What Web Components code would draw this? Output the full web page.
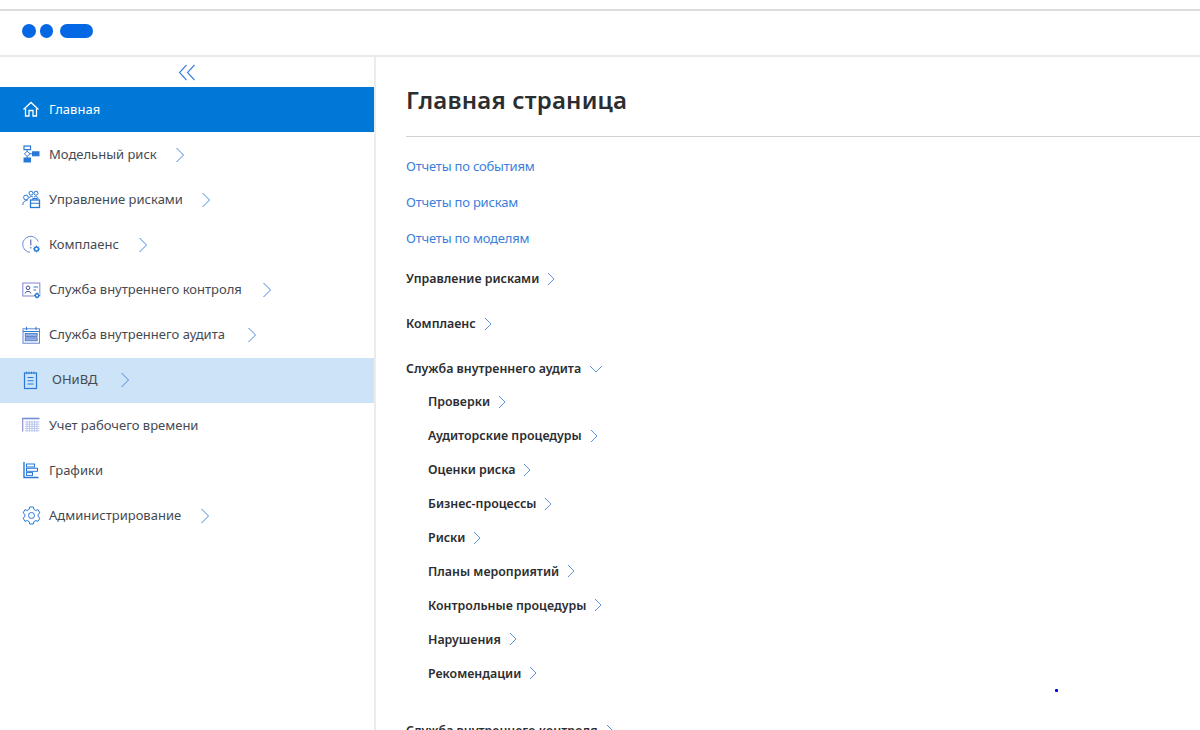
<!DOCTYPE html>
<html lang="ru">
<head>
<meta charset="utf-8">
<title>Главная страница</title>
<style>
  html, body { margin: 0; height: 730px; overflow: hidden; background: #fff; font-family: "Noto Sans", "Open Sans", sans-serif; }
</style>
</head>
<body>
<app-shell>
  <app-header slot="header"></app-header>
  <side-nav slot="nav">
    <nav-item icon="home" active>Главная</nav-item>
    <nav-item icon="model" arrow gap="18">Модельный риск</nav-item>
    <nav-item icon="risk" arrow gap="18">Управление рисками</nav-item>
    <nav-item icon="compliance" arrow gap="19">Комплаенс</nav-item>
    <nav-item icon="control" arrow gap="20">Служба внутреннего контроля</nav-item>
    <nav-item icon="audit" arrow gap="22">Служба внутреннего аудита</nav-item>
    <nav-item icon="note" arrow selected gap="22">ОНиВД</nav-item>
    <nav-item icon="table">Учет рабочего времени</nav-item>
    <nav-item icon="chart">Графики</nav-item>
    <nav-item icon="gear" arrow gap="19">Администрирование</nav-item>
  </side-nav>
  <main-page slot="main" heading="Главная страница">
    <report-link>Отчеты по событиям</report-link>
    <report-link>Отчеты по рискам</report-link>
    <report-link>Отчеты по моделям</report-link>
    <tree-group label="Управление рисками"></tree-group>
    <tree-group label="Комплаенс"></tree-group>
    <tree-group label="Служба внутреннего аудита" open>
      <tree-leaf>Проверки</tree-leaf>
      <tree-leaf>Аудиторские процедуры</tree-leaf>
      <tree-leaf>Оценки риска</tree-leaf>
      <tree-leaf>Бизнес-процессы</tree-leaf>
      <tree-leaf>Риски</tree-leaf>
      <tree-leaf>Планы мероприятий</tree-leaf>
      <tree-leaf>Контрольные процедуры</tree-leaf>
      <tree-leaf>Нарушения</tree-leaf>
      <tree-leaf>Рекомендации</tree-leaf>
    </tree-group>
    <tree-group label="Служба внутреннего контроля"></tree-group>
  </main-page>
</app-shell>

<script>
const chevron = `<svg class="chev" width="10" height="16" viewBox="0 0 10 16" fill="none" stroke="#4a86d8" stroke-width="1"><path d="M1.5 1 L8.5 8 L1.5 15"/></svg>`;
const chevronSmall = `<svg class="chev" width="8" height="14" viewBox="0 0 8 14" fill="none" stroke="#5a94e0" stroke-width="1"><path d="M1 1 L7 7 L1 13"/></svg>`;
const chevronDown = `<svg class="chev" width="14" height="8" viewBox="0 0 14 8" fill="none" stroke="#5a94e0" stroke-width="1"><path d="M1 1 L7 7 L13 1"/></svg>`;

const icons = {
  home: `<path d="M1.5 9.5 L9 2.5 L16.5 9.5" stroke-width="1.3"/><path d="M3.5 8.5 V16 H7 V10.5 H11 V16 H14.5 V8.5" stroke-width="1.3"/>`,
  model: `<rect x="2" y="1" width="6.5" height="3.6" stroke-width="1.2"/><path d="M5.2 4.6 V6.2 M5.2 11.4 V13" stroke-width="1"/><path d="M5.2 6.2 L8 8.8 L5.2 11.4 L2.4 8.8 Z" stroke-width="1"/><rect x="2" y="13" width="6.5" height="4" fill="#2a78d6" stroke-width="1"/><rect x="10.5" y="6.8" width="6.5" height="4" fill="#2a78d6" stroke-width="1"/><path d="M8 8.8 H10.5" stroke-width="1"/>`,
  risk: `<circle cx="4" cy="7.5" r="2.4"/><path d="M0.8 15 C1 11.5 3 10.5 5.5 10.5"/><circle cx="9" cy="3.2" r="2"/><circle cx="14" cy="3.2" r="2"/><path d="M7 8 C7.5 6.4 9.5 6.2 11 7 M12 7 C14 6.1 16 7 16.5 8.5"/><rect x="8.5" y="10" width="9" height="7.5" stroke-width="1.3"/><path d="M11 10 V8.5 H15 V10 M8.5 13.3 H17.5" stroke-width="1.1"/>`,
  compliance: `<path d="M16.2 6.5 A8 8 0 1 0 8 17.3" stroke="#6b8fd6"/><path d="M8.8 4.5 V10.5 M8.8 12 V13.5" stroke="#4a4f9a"/><circle cx="14.5" cy="14" r="2" stroke-width="1.4"/><path d="M14.5 10.6 V11.8 M14.5 16.2 V17.4 M11.1 14 H12.3 M16.7 14 H17.9 M12.2 11.7 L13 12.5 M16 15.5 L16.8 16.3 M16.8 11.7 L16 12.5 M13 15.5 L12.2 16.3" stroke-width="1"/>`,
  control: `<rect x="0.8" y="2" width="17" height="13" stroke="#8b8fd6" stroke-width="1.1"/><circle cx="6" cy="6.8" r="1.8" stroke="#4a4f9a"/><path d="M3 12.5 C3.3 9.8 8.7 9.8 9 12.5" stroke="#4a4f9a"/><path d="M11.5 6 H16 M11.5 9 H14"/><circle cx="15" cy="14.5" r="3" fill="#fff" stroke="none"/><circle cx="15" cy="14.5" r="1.8" fill="#fff" stroke-width="1.4"/><path d="M15 11.5 V12.6 M15 16.4 V17.5 M12 14.5 H13.1 M16.9 14.5 H18" stroke-width="1"/>`,
  audit: `<rect x="1" y="2.8" width="16.5" height="14.4" stroke="#5a86d8"/><path d="M4.5 0.8 V4 M14 0.8 V4 M1 5.5 H17.5"/><rect x="3.2" y="7.5" width="12" height="3" fill="#8fb0e6" stroke="#4a6fc0" stroke-width=".8"/><rect x="3.2" y="11.8" width="12" height="3" fill="#8fb0e6" stroke="#4a6fc0" stroke-width=".8"/>`,
  note: `<rect x="2.5" y="2" width="12" height="15.5" stroke-width="1.2"/><path d="M4.5 0.6 V3 M7 0.6 V3 M9.5 0.6 V3 M12 0.6 V3" stroke-width=".9"/><path d="M5.5 6.5 H11.5 M5.5 9.8 H11.5 M5.5 13 H11.5" stroke-width="1.1"/>`,
  table: `<path d="M0.5 2.5 H17.5" stroke-width="1.6" stroke="#6f92d8"/><path d="M0.7 2 V15.5" stroke="#8f8fd0" stroke-width="1.2"/><path d="M3 6 H17.5 M3 8.2 H17.5 M3 10.4 H17.5 M3 12.6 H17.5 M3 14.8 H17.5 M5 5 V15.5 M7.5 5 V15.5 M10 5 V15.5 M12.5 5 V15.5 M15 5 V15.5" stroke="#a4b8e8" stroke-width=".7"/>`,
  chart: `<path d="M2 1 V16.5 H16.5" stroke-width="1.4"/><rect x="4.5" y="3" width="8" height="3" stroke-width="1"/><rect x="4.5" y="7.3" width="11" height="3" stroke-width="1"/><rect x="4.5" y="11.6" width="6" height="2.8" stroke-width="1"/>`,
  gear: `<path d="M7.6 1 H11.4 L11.9 3.4 L13.8 4.5 L16 3.6 L17.9 6.9 L16.1 8.4 V10.6 L17.9 12.1 L16 15.4 L13.8 14.5 L11.9 15.6 L11.4 18 H7.6 L7.1 15.6 L5.2 14.5 L3 15.4 L1.1 12.1 L2.9 10.6 V8.4 L1.1 6.9 L3 3.6 L5.2 4.5 L7.1 3.4 Z" stroke-linejoin="round"/><circle cx="9.5" cy="9.5" r="3"/>`
};

const shellTpl = document.createElement('template');
shellTpl.innerHTML = `
  <style>
    :host { display: grid; grid-template-rows: 57px 673px; grid-template-columns: 376px 1fr; height: 730px; overflow: hidden; }
    ::slotted([slot=header]) { grid-column: 1 / 3; }
    .dot { position: absolute; left: 1055px; top: 689px; width: 3px; height: 3px; background: #0000e6; border-radius: 1px; }
  </style>
  <slot name="header"></slot>
  <slot name="nav"></slot>
  <slot name="main"></slot>
  <div class="dot"></div>
`;
class AppShell extends HTMLElement {
  constructor() {
    super();
    this.attachShadow({ mode: 'open' }).appendChild(shellTpl.content.cloneNode(true));
  }
}
customElements.define('app-shell', AppShell);

const headerTpl = document.createElement('template');
headerTpl.innerHTML = `
  <style>
    :host { display: flex; flex-direction: column; box-sizing: border-box; height: 57px; padding-top: 9px; background: #fff; border-bottom: 2px solid #e9e9e9; }
    .top { height: 2px; background: #dcdcdc; flex: none; }
    .logo { flex: 1; display: flex; align-items: center; gap: 4px; padding: 0 0 5px 22px; }
    .logo i { display: block; height: 14px; background: #0468e4; border-radius: 7px; width: 14px; }
    .logo i:nth-child(2) { margin-right: 3px; width: 13px; }
    .logo i:nth-child(3) { width: 33px; }
  </style>
  <div class="top"></div>
  <div class="logo"><i></i><i></i><i></i></div>
`;
class AppHeader extends HTMLElement {
  constructor() {
    super();
    this.attachShadow({ mode: 'open' }).appendChild(headerTpl.content.cloneNode(true));
  }
}
customElements.define('app-header', AppHeader);

const navTpl = document.createElement('template');
navTpl.innerHTML = `
  <style>
    :host { display: block; box-sizing: border-box; width: 376px; height: 673px; border-right: 2px solid #ececec; background: #fff; }
    .toggle { height: 30px; box-sizing: border-box; padding-top: 1px; display: flex; align-items: center; justify-content: center; }
    .toggle svg { display: block; }
  </style>
  <div class="toggle">
    <svg width="18" height="18" viewBox="0 0 18 18" fill="none" stroke="#3a7fdf" stroke-width="1.1"><path d="M8.5 1 L1.5 8.5 L8.5 16 M16.5 1 L9.5 8.5 L16.5 16"/></svg>
  </div>
  <slot></slot>
`;
class SideNav extends HTMLElement {
  constructor() {
    super();
    this.attachShadow({ mode: 'open' }).appendChild(navTpl.content.cloneNode(true));
  }
}
customElements.define('side-nav', SideNav);

const itemTpl = document.createElement('template');
itemTpl.innerHTML = `
  <style>
    :host { display: flex; align-items: center; height: 45.15px; padding-left: 22px; font-size: 13px; color: #444a52; }
    :host([active]) { background: #0078d7; color: #fff; }
    :host([selected]) { background: #cde3f7; }
    :host([selected]) .label { margin-left: 3px; }
    .icon { width: 19px; height: 19px; margin-right: 8px; flex: none; display: block; fill: none; stroke: #2a78d6; stroke-width: 1; }
    :host([active]) .icon { stroke: #fff; }
    .label { margin-top: -2px; }
    .arrow { display: none; line-height: 0; }
    :host([arrow]) .arrow { display: block; }
    .chev { display: block; }
  </style>
  <svg class="icon" viewBox="0 0 19 19"></svg>
  <span class="label"><slot></slot></span>
  <span class="arrow">${chevron}</span>
`;
class NavItem extends HTMLElement {
  constructor() {
    super();
    this.attachShadow({ mode: 'open' }).appendChild(itemTpl.content.cloneNode(true));
    this.shadowRoot.querySelector('.icon').innerHTML = icons[this.getAttribute('icon')] || '';
    this.shadowRoot.querySelector('.arrow').style.marginLeft = (this.getAttribute('gap') || 16) + 'px';
  }
}
customElements.define('nav-item', NavItem);

const pageTpl = document.createElement('template');
pageTpl.innerHTML = `
  <style>
    :host { display: block; box-sizing: border-box; padding-left: 30px; height: 673px; overflow: hidden; background: #fff; }
    h1 { margin: 0; height: 80px; box-sizing: border-box; padding-top: 25px; font-size: 24px; line-height: 36px; font-weight: 600; letter-spacing: .2px; color: #2b2d30; border-bottom: 1px solid #d2d2d2; }
    .links { padding-top: 11px; }
  </style>
  <h1></h1>
  <div class="links"><slot></slot></div>
`;
class MainPage extends HTMLElement {
  constructor() {
    super();
    this.attachShadow({ mode: 'open' }).appendChild(pageTpl.content.cloneNode(true));
    this.shadowRoot.querySelector('h1').textContent = this.getAttribute('heading');
  }
}
customElements.define('main-page', MainPage);

const linkTpl = document.createElement('template');
linkTpl.innerHTML = `
  <style>
    :host { display: flex; align-items: center; height: 36px; font-size: 13px; color: #3a80da; letter-spacing: -.2px; }
  </style>
  <slot></slot>
`;
class ReportLink extends HTMLElement {
  constructor() {
    super();
    this.attachShadow({ mode: 'open' }).appendChild(linkTpl.content.cloneNode(true));
  }
}
customElements.define('report-link', ReportLink);

const groupTpl = document.createElement('template');
groupTpl.innerHTML = `
  <style>
    :host { display: block; font-size: 12.4px; font-weight: 600; color: #2b2d30; }
    .head { display: flex; align-items: center; gap: 8px; height: 45px; }
    .label { margin-top: -1px; }
    .chev { display: block; }
    .kids { display: none; padding: 0 0 18px 22px; margin-top: -6px; }
    :host([open]) .kids { display: block; }
  </style>
  <div class="head"><span class="label"></span><span class="mark"></span></div>
  <div class="kids"><slot></slot></div>
`;
class TreeGroup extends HTMLElement {
  constructor() {
    super();
    this.attachShadow({ mode: 'open' }).appendChild(groupTpl.content.cloneNode(true));
    this.shadowRoot.querySelector('.label').textContent = this.getAttribute('label');
    const mark = this.shadowRoot.querySelector('.mark');
    mark.innerHTML = this.hasAttribute('open') ? chevronDown : chevronSmall;
    mark.style.lineHeight = 0;
  }
}
customElements.define('tree-group', TreeGroup);

const leafTpl = document.createElement('template');
leafTpl.innerHTML = `
  <style>
    :host { display: flex; align-items: center; gap: 8px; height: 33.9px; }
    .chev { display: block; }
  </style>
  <span><slot></slot></span>${chevronSmall}
`;
class TreeLeaf extends HTMLElement {
  constructor() {
    super();
    this.attachShadow({ mode: 'open' }).appendChild(leafTpl.content.cloneNode(true));
  }
}
customElements.define('tree-leaf', TreeLeaf);
</script>
</body>
</html>
